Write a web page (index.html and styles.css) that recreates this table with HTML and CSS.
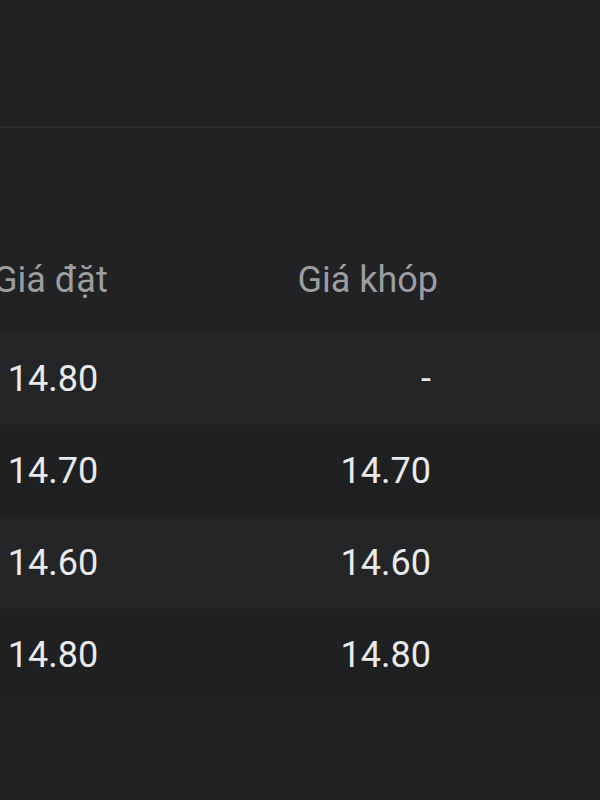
FILE: index.html
```html
<!DOCTYPE html>
<html lang="vi">
<head>
<meta charset="utf-8">
<link rel="stylesheet" href="styles.css">
</head>
<body>
<div class="screen">
  <div class="topbar"></div>
  <div class="table">
    <div class="row head">
      <div class="c1">Giá đặt</div>
      <div class="c2">Giá khóp</div>
    </div>
    <div class="row light">
      <div class="c1">14.80</div>
      <div class="c2 num">-</div>
    </div>
    <div class="row dark">
      <div class="c1">14.70</div>
      <div class="c2 num">14.70</div>
    </div>
    <div class="row light">
      <div class="c1">14.60</div>
      <div class="c2 num">14.60</div>
    </div>
    <div class="row dark">
      <div class="c1">14.80</div>
      <div class="c2 num">14.80</div>
    </div>
  </div>
</div>
</body>
</html>
```

FILE: styles.css
```css
html, body {
  margin: 0;
  padding: 0;
  background: #212224;
}
.screen {
  width: 600px;
  height: 800px;
  overflow: hidden;
  background: #212224;
  font-family: Roboto, "Noto Sans", sans-serif;
}
.topbar {
  height: 126px;
  background: #202123;
  border-bottom: 2px solid #2a2b2d;
  box-shadow: inset 0 3px 3px -2px #27282a;
}
.table {
  display: flex;
  flex-direction: column;
}
.row {
  display: grid;
  grid-template-columns: 106px 332px;
  align-items: center;
  font-size: 36px;
  line-height: 40px;
  padding: 26px 0;
  color: #e9eaec;
}
.row.head {
  padding: 132px 0 33px;
  color: #9c9da0;
}
.row.head .c1 {
  margin-left: -7px;
}
.row.light { background: #242527; }
.row.dark { background: #1f2022; }
.c1 {
  text-align: center;
  white-space: nowrap;
}
.c2 {
  text-align: right;
  white-space: nowrap;
}
.c2.num {
  padding-right: 7px;
}
```
